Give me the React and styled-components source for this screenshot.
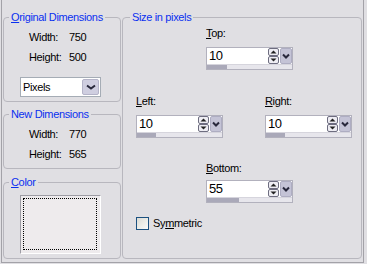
import styled, { createGlobalStyle } from 'styled-components';

const Global = createGlobalStyle`
  html, body { margin: 0; padding: 0; background: #e0dfe3; }
  body {
    font-family: "Liberation Sans", Arial, sans-serif;
    font-size: 11px;
    letter-spacing: -0.35px;
    color: #000;
  }
`;

const Window = styled.div`
  width: 367px;
  height: 264px;
  background: #e0dfe3;
  overflow: hidden;
`;

const Frame = styled.div`
  box-sizing: border-box;
  margin-left: 1px;
  width: 363px;
  height: 263px;
  border: 1px solid #a3a2a8;
  border-top: none;
  display: flex;
  gap: 1px;
  padding: 11px 1px 0 1px;
`;

const Column = styled.div`
  display: flex;
  flex-direction: column;
  width: 118px;
`;

const Group = styled.fieldset`
  box-sizing: border-box;
  margin: 0 0 ${(p) => p.$after || 0}px 0;
  padding: 0;
  min-width: 0;
  width: ${(p) => p.$w}px;
  height: ${(p) => p.$h}px;
  border: 1px solid #b8b7be;
  border-radius: 4px;
`;

const Legend = styled.legend`
  padding: 0 2px;
  margin-left: ${(p) => p.$ml || 5}px;
  line-height: 13px;
  color: #0a30f0;
`;

const Info = styled.div`
  display: grid;
  grid-template-columns: 40px auto;
  row-gap: 7px;
  padding: 7px 0 0 25px;
  line-height: 13px;
`;

const Combo = styled.div`
  box-sizing: border-box;
  display: flex;
  align-items: center;
  margin: 13px 0 0 16px;
  width: 81px;
  height: 20px;
  border: 1px solid #a5acb5;
  background: #fff;
`;

const ComboText = styled.span`
  flex: 1;
  padding-left: 2px;
`;

const ComboButton = styled.div`
  box-sizing: border-box;
  width: 17px;
  height: 16px;
  margin-right: 1px;
  border: 1px solid #b4b3c8;
  border-radius: 2px;
  background: #cfcee0;
  display: flex;
  align-items: center;
  justify-content: center;
`;

const Swatch = styled.div`
  box-sizing: border-box;
  display: flex;
  margin: 6px 0 0 16px;
  width: 81px;
  height: 59px;
  padding: 2px 3px 3px 2px;
  background: #eeebed;
  border: 1px solid #9d9ca4;
  border-right-color: #fff;
  border-bottom-color: #fff;
`;

const Focus = styled.div`
  flex: 1;
  border: 1px dotted #000;
`;

const Sizes = styled.div`
  display: flex;
  flex-direction: column;
`;

const Row = styled.div`
  display: flex;
  gap: 42px;
  padding-left: ${(p) => p.$left}px;
  margin-top: ${(p) => p.$top}px;
`;

const Field = styled.div`
  display: flex;
  flex-direction: column;
  gap: ${(p) => p.$gap || 7}px;
`;

const Label = styled.div`
  line-height: 13px;
`;

const Spin = styled.div`
  box-sizing: border-box;
  display: flex;
  flex-direction: column;
  width: 87px;
  height: 23px;
  border: 1px solid #b2b1bd;
  background: #fff;
`;

const SpinTop = styled.div`
  display: flex;
  align-items: center;
  height: 16px;
`;

const Value = styled.span`
  width: 61px;
  padding-left: 2px;
  box-sizing: border-box;
  font-size: 13px;
  letter-spacing: -0.5px;
  line-height: 16px;
`;

const Drop = styled.div`
  box-sizing: border-box;
  margin-left: 1px;
  width: 12px;
  height: 16px;
  background: #c4c3d6;
  border: 1px solid #aeadc2;
  border-radius: 2px;
  display: flex;
  align-items: center;
  justify-content: center;
`;

const Bar = styled.div`
  height: 5px;
  background: #e7e6ec;
  border-top: 1px solid #d6d5dd;
  display: flex;
`;

const BarFill = styled.div`
  background: #aaa9b9;
`;

const CheckRow = styled.label`
  display: flex;
  align-items: center;
  gap: 4px;
  margin: 14px 0 0 13px;
  line-height: 13px;
`;

const Box = styled.span`
  box-sizing: border-box;
  width: 13px;
  height: 13px;
  border: 1px solid #1c5180;
  background: linear-gradient(135deg, #dcdcd5, #fbfbf9);
`;

const Chevron = ({ w = 8 }) => (
  <svg width={w} height="6" viewBox={`0 0 ${w} 6`}>
    <path d={`M1 1.5 L${w / 2} 4.5 L${w - 1} 1.5`} fill="none" stroke="#28283c" strokeWidth="2" />
  </svg>
);

const Arrows = () => (
  <svg width="11" height="16" viewBox="0 0 11 16">
    <rect x="0.5" y="0.5" width="10" height="7" rx="1.5" fill="#eeedf3" stroke="#6e6d80" />
    <path d="M2.5 5.5 L5.5 2.5 L8.5 5.5 Z" fill="#222" />
    <rect x="0.5" y="8.5" width="10" height="7" rx="1.5" fill="#eeedf3" stroke="#6e6d80" />
    <path d="M2.5 10.5 L5.5 13.5 L8.5 10.5 Z" fill="#222" />
  </svg>
);

const SpinField = ({ hot, rest, value, fill, gap }) => (
  <Field $gap={gap}>
    <Label><u>{hot}</u>{rest}</Label>
    <Spin>
      <SpinTop>
        <Value>{value}</Value>
        <Arrows />
        <Drop><Chevron /></Drop>
      </SpinTop>
      <Bar>
        <BarFill style={{ width: fill }} />
      </Bar>
    </Spin>
  </Field>
);

export default function App() {
  return (
    <Window>
      <Global />
      <Frame>
        <Column>
          <Group $w={118} $h={91} $after={6}>
            <Legend><u>O</u>riginal Dimensions</Legend>
            <Info>
              <span>Width:</span><span>750</span>
              <span>Height:</span><span>500</span>
            </Info>
            <Combo>
              <ComboText>Pixels</ComboText>
              <ComboButton><Chevron w={10} /></ComboButton>
            </Combo>
          </Group>
          <Group $w={118} $h={61} $after={7}>
            <Legend>New Dimensions</Legend>
            <Info>
              <span>Width:</span><span>770</span>
              <span>Height:</span><span>565</span>
            </Info>
          </Group>
          <Group $w={118} $h={83}>
            <Legend><u>C</u>olor</Legend>
            <Swatch><Focus /></Swatch>
          </Group>
        </Column>
        <Group $w={240} $h={248}>
          <Legend $ml={7}>Size in pixels</Legend>
          <Sizes>
            <Row $left={83} $top={3}>
              <SpinField hot="T" rest="op:" value="10" fill={20} />
            </Row>
            <Row $left={13} $top={25}>
              <SpinField hot="L" rest="eft:" value="10" fill={19} />
              <SpinField hot="R" rest="ight:" value="10" fill={19} />
            </Row>
            <Row $left={83} $top={24}>
              <SpinField hot="B" rest="ottom:" value="55" fill={32} gap={5} />
            </Row>
            <CheckRow>
              <Box />
              <span>Sy<u>m</u>metric</span>
            </CheckRow>
          </Sizes>
        </Group>
      </Frame>
    </Window>
  );
}
